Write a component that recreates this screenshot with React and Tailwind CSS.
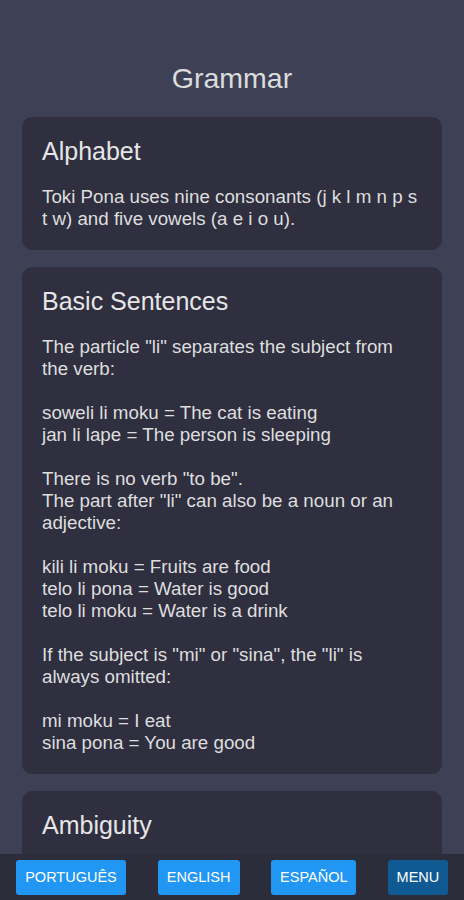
export default function App() {
  const font = { fontFamily: '"Liberation Sans", Arial, sans-serif' };
  const Card = ({ title, children }) => (
    <div className="rounded-[10px] bg-[#2f2f40] px-5 pt-[19px] pb-5">
      <h2 className="text-[25px] leading-[30px] text-[#e6e6e6]">{title}</h2>
      {children && (
        <div className="mt-5 text-[18.75px] leading-[22px] text-[#dedede]">{children}</div>
      )}
    </div>
  );
  const buttons = [
    { t: 'PORTUGUÊS', w: 'w-[110px]', c: 'bg-[#2196f3]' },
    { t: 'ENGLISH', w: 'w-[82px]', c: 'bg-[#2196f3]' },
    { t: 'ESPAÑOL', w: 'w-[85px]', c: 'bg-[#2196f3]' },
    { t: 'MENU', w: 'w-[60px]', c: 'bg-[#0f5a92]' },
  ];
  return (
    <div className="min-h-[900px] bg-[#3e4156]" style={font}>
      <div className="px-[22px] pt-[61px] pb-[60px]">
        <h1 className="text-center text-[28.5px] leading-[34px] text-[#dcdcdc]">Grammar</h1>
        <div className="mt-[22px] flex flex-col gap-[17px]">
          <Card title="Alphabet">
            <p>Toki Pona uses nine consonants (j k l m n p s t w) and five vowels (a e i o u).</p>
          </Card>
          <Card title="Basic Sentences">
            <p>The particle "li" separates the subject from the verb:</p>
            <br />
            <p>soweli li moku = The cat is eating<br />jan li lape = The person is sleeping</p>
            <br />
            <p>There is no verb "to be".<br />The part after "li" can also be a noun or an adjective:</p>
            <br />
            <p>kili li moku = Fruits are food<br />telo li pona = Water is good<br />telo li moku = Water is a drink</p>
            <br />
            <p>If the subject is "mi" or "sina", the "li" is always omitted:</p>
            <br />
            <p>mi moku = I eat<br />sina pona = You are good</p>
          </Card>
          <Card title="Ambiguity">
            <p>Toki Pona words can have many meanings depending on context.</p>
          </Card>
        </div>
      </div>
      <div className="fixed bottom-0 left-0 right-0 h-[46px] bg-[#2c2d3a] flex items-center justify-between px-4">
        {buttons.map((b) => (
          <button
            key={b.t}
            className={`${b.w} ${b.c} h-[35px] rounded-[3px] text-white text-[14.5px] leading-[35px] text-center whitespace-nowrap`}
            style={font}
          >
            {b.t}
          </button>
        ))}
      </div>
    </div>
  );
}
